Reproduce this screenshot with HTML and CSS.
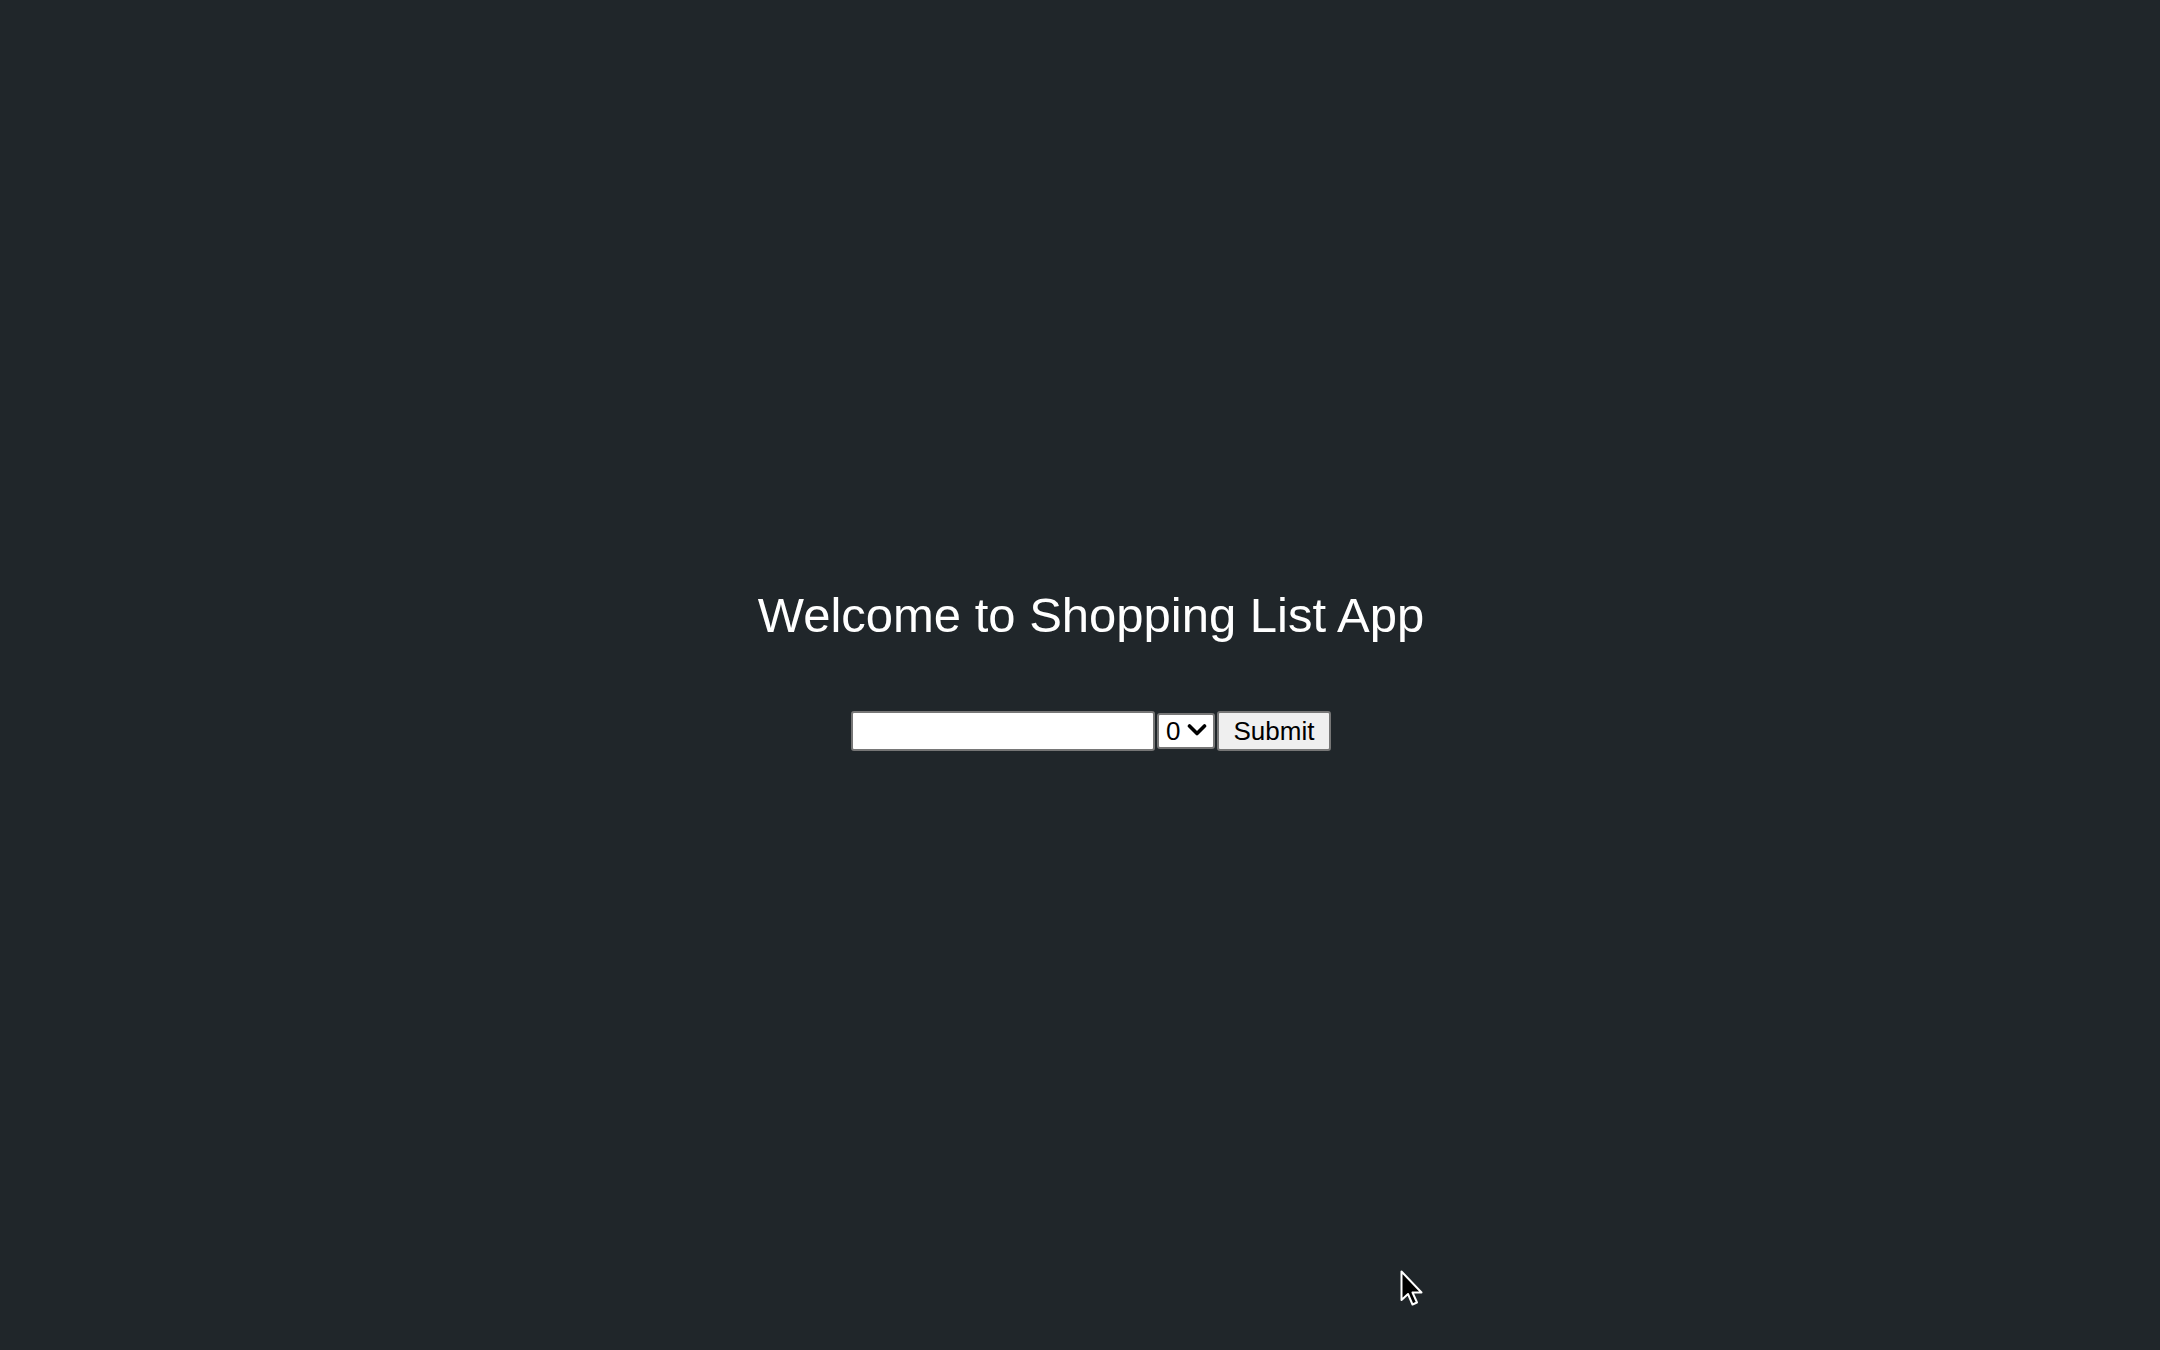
FILE: index.html
```html
<!DOCTYPE html>
<html lang="en">
<head>
<meta charset="utf-8">
<title>Shopping List App</title>
<link rel="stylesheet" href="styles.css">
</head>
<body>
<main class="app">
  <h1 class="title">Welcome to Shopping List App</h1>
  <form class="form">
    <input class="item-input" type="text">
    <div class="select-wrap">
      <select class="qty"><option>0</option><option>1</option><option>2</option></select>
      <svg class="chev" width="20" height="12" viewBox="0 0 20 12"><polyline points="2.5,2 10,9.5 17.5,2" fill="none" stroke="#000" stroke-width="3.6" stroke-linecap="round" stroke-linejoin="round"/></svg>
    </div>
    <button class="submit" type="button">Submit</button>
  </form>
</main>
<svg class="cursor" width="26" height="40" viewBox="0 0 26 40">
  <path d="M1.5 1.5 L1.5 30 L8 24 L12.5 34.5 L17 32.5 L12.5 22.5 L21.5 22.5 Z" fill="#000" stroke="#fff" stroke-width="2" stroke-linejoin="round"/>
</svg>
</body>
</html>
```
FILE: styles.css
```css
html, body {
  margin: 0;
  padding: 0;
  height: 100%;
}
body {
  background: #20262a;
  font-family: "Liberation Sans", Arial, sans-serif;
  overflow: hidden;
}
.app {
  display: flex;
  flex-direction: column;
  align-items: center;
  padding-top: 587px;
  padding-left: 22px;
}
.title {
  margin: 0;
  font-size: 49px;
  font-weight: normal;
  color: #ffffff;
  line-height: 57px;
}
.form {
  display: flex;
  align-items: center;
  gap: 2px;
  margin-top: 67px;
}
.item-input {
  box-sizing: border-box;
  width: 304px;
  height: 40px;
  border: 2px solid #767676;
  border-radius: 3px;
  background: #ffffff;
  padding: 0 4px;
  font-size: 26px;
  font-family: "Liberation Sans", Arial, sans-serif;
  margin: 0;
}
.select-wrap {
  position: relative;
  width: 58px;
  height: 36px;
}
.qty {
  appearance: none;
  -webkit-appearance: none;
  box-sizing: border-box;
  width: 58px;
  height: 36px;
  border: 2px solid #767676;
  border-radius: 3px;
  background: #ffffff;
  font-size: 26px;
  font-family: "Liberation Sans", Arial, sans-serif;
  color: #000;
  padding: 0 0 0 7px;
  margin: 0;
}
.chev {
  position: absolute;
  left: 30px;
  top: 11px;
  pointer-events: none;
}
.submit {
  box-sizing: border-box;
  width: 114px;
  height: 40px;
  border: 2px solid #767676;
  border-radius: 3px;
  background: #efefef;
  font-size: 26px;
  font-family: "Liberation Sans", Arial, sans-serif;
  color: #000;
  padding: 0;
  margin: 0;
}
.cursor {
  position: absolute;
  left: 1400px;
  top: 1270px;
}
```
